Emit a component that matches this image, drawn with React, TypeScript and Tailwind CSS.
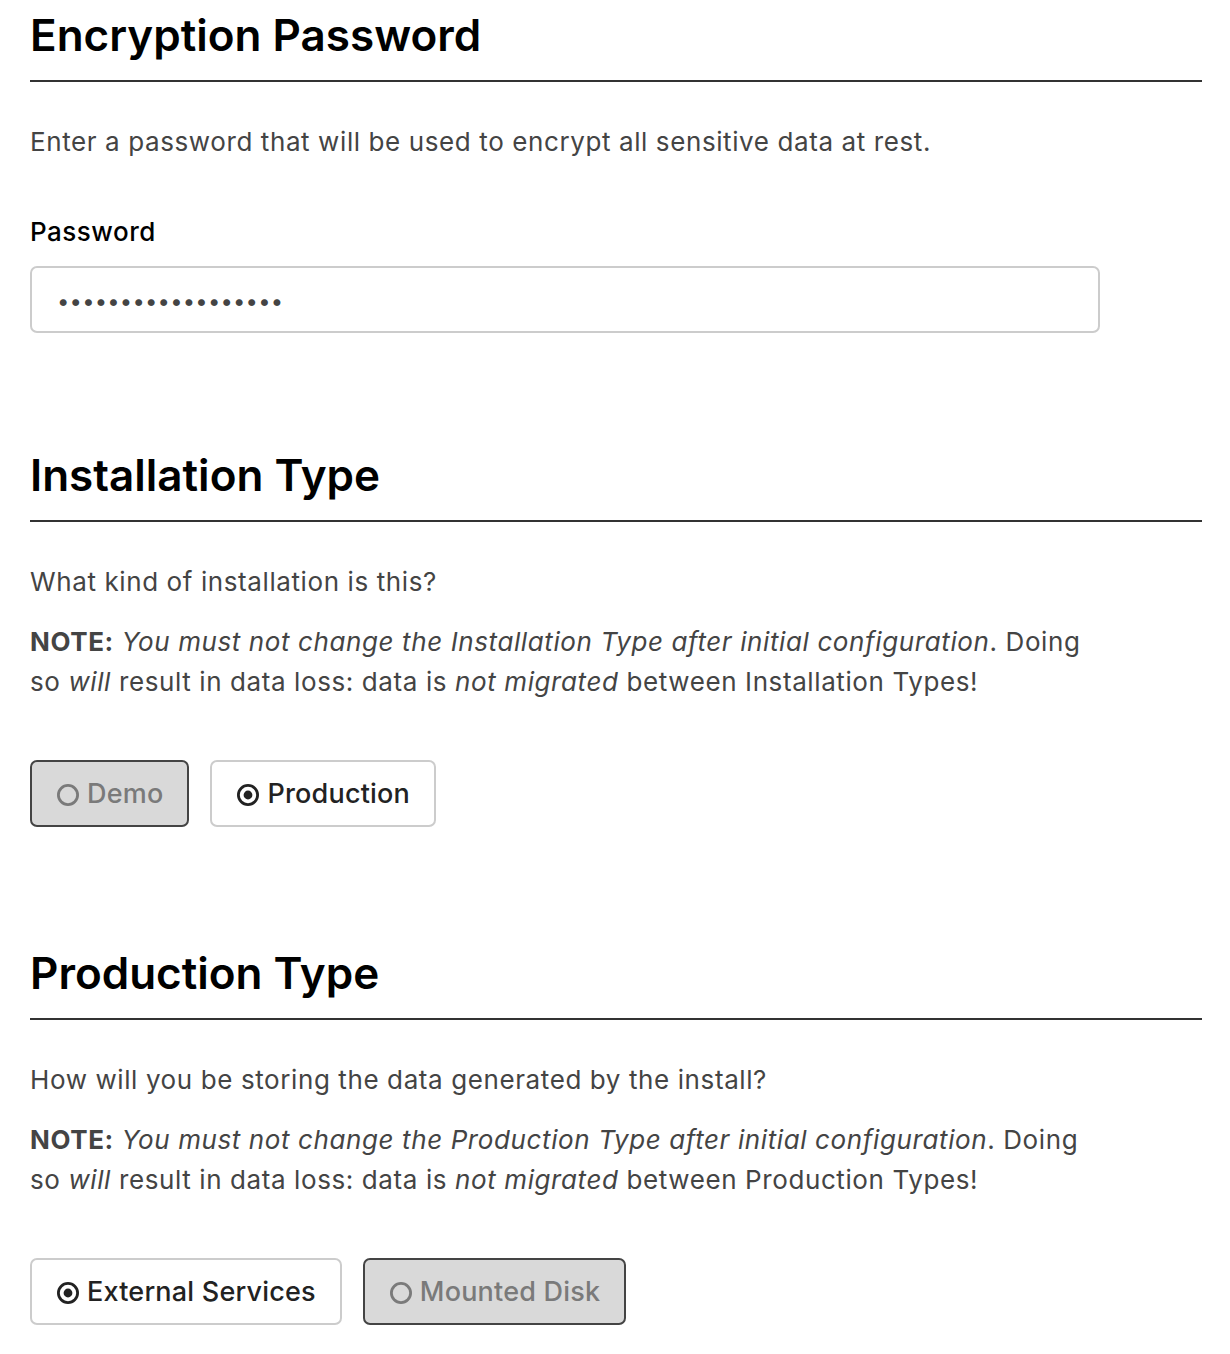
import { useState } from 'react';

type Option = { value: string; label: string };

function RadioIcon({ checked }: { checked: boolean }) {
    return (
        <svg width="24" height="24" viewBox="0 0 24 24" className="shrink-0">
            <circle cx="12" cy="12" r="9.6" fill="none" stroke="currentColor" strokeWidth="2.8" />
            {checked && <circle cx="12" cy="12" r="4.4" fill="currentColor" />}
        </svg>
    );
}

function ChoiceGroup({
    options,
    value,
    onChange,
}: {
    options: Option[];
    value: string;
    onChange: (next: string) => void;
}) {
    return (
        <div className="flex gap-[21px]">
            {options.map((option) => {
                const active = option.value === value;
                return (
                    <button
                        key={option.value}
                        type="button"
                        onClick={() => onChange(option.value)}
                        className={
                            active
                                ? 'flex h-[67px] items-center gap-[7px] rounded-[7px] border-2 border-[#cccccc] bg-white px-[24px] pt-[2px] text-[27px] font-medium tracking-[0.2px] text-[#222222]'
                                : 'flex h-[67px] items-center gap-[7px] rounded-[7px] border-2 border-[#444444] bg-[#d9d9d9] px-[24px] pt-[2px] text-[27px] font-medium tracking-[0.2px] text-[#7a7a7a]'
                        }
                    >
                        <RadioIcon checked={active} />
                        {option.label}
                    </button>
                );
            })}
        </div>
    );
}

function SectionTitle({ children }: { children: string }) {
    return (
        <h2 className="border-b-2 border-[#333333] pb-[21px] text-[44px] font-semibold leading-[48px] text-black">
            {children}
        </h2>
    );
}

export default function App() {
    const [password, setPassword] = useState('abcdefghijklmnopqr');
    const [installType, setInstallType] = useState('production');
    const [productionType, setProductionType] = useState('external');

    return (
        <div
            className="min-h-[1354px] bg-white pl-[30px] pr-[28px] pt-[11px] text-[#444444]"
            style={{ fontFamily: 'Inter, "Noto Sans", sans-serif' }}
        >
            <section>
                <SectionTitle>Encryption Password</SectionTitle>
                <p className="mt-[42px] text-[26px] leading-[36px] tracking-[0.6px]">
                    Enter a password that will be used to encrypt all sensitive data at rest.
                </p>
                <label className="mt-[54px] block text-[26px] font-medium leading-[36px] tracking-[0.5px] text-black">
                    Password
                </label>
                <input
                    type="password"
                    value={password}
                    onChange={(e) => setPassword(e.target.value)}
                    className="mt-[16px] block h-[67px] w-[1070px] rounded-[7px] border-2 border-[#cccccc] px-[25px] pt-[3px] text-[22px] tracking-[0.2px] text-[#444444] outline-none"
                />
            </section>

            <section className="mt-[118px]">
                <SectionTitle>Installation Type</SectionTitle>
                <p className="mt-[42px] text-[26px] leading-[36px] tracking-[0.6px]">
                    What kind of installation is this?
                </p>
                <p className="mt-[22px] max-w-[1070px] text-[26px] leading-[40px] tracking-[0.6px]">
                    <b>NOTE:</b> <i>You must not change the Installation Type after initial configuration</i>. Doing
                    so <i>will</i> result in data loss: data is <i>not migrated</i> between Installation Types!
                </p>
                <div className="mt-[58px]">
                    <ChoiceGroup
                        options={[
                            { value: 'demo', label: 'Demo' },
                            { value: 'production', label: 'Production' },
                        ]}
                        value={installType}
                        onChange={setInstallType}
                    />
                </div>
            </section>

            <section className="mt-[122px]">
                <SectionTitle>Production Type</SectionTitle>
                <p className="mt-[42px] text-[26px] leading-[36px] tracking-[0.6px]">
                    How will you be storing the data generated by the install?
                </p>
                <p className="mt-[22px] max-w-[1070px] text-[26px] leading-[40px] tracking-[0.6px]">
                    <b>NOTE:</b> <i>You must not change the Production Type after initial configuration</i>. Doing
                    so <i>will</i> result in data loss: data is <i>not migrated</i> between Production Types!
                </p>
                <div className="mt-[58px]">
                    <ChoiceGroup
                        options={[
                            { value: 'external', label: 'External Services' },
                            { value: 'disk', label: 'Mounted Disk' },
                        ]}
                        value={productionType}
                        onChange={setProductionType}
                    />
                </div>
            </section>
        </div>
    );
}
